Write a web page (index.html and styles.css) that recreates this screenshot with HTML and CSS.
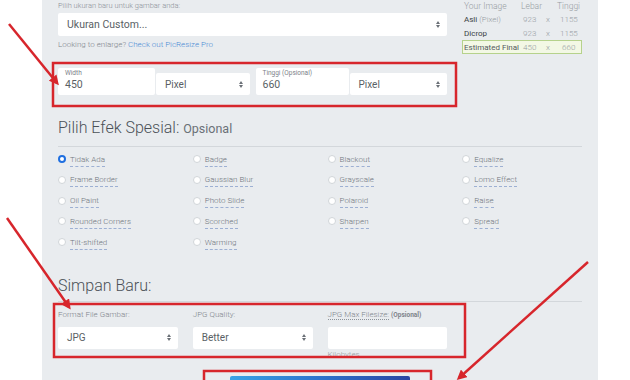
FILE: index.html
```html
<!DOCTYPE html>
<html>
<head>
<meta charset="utf-8">
<link rel="stylesheet" href="styles.css">
</head>
<body>
<div class="page">
  <div class="panel">
    <div class="top grid4">
      <div class="left">
        <div class="lbl first">Pilih ukuran baru untuk gambar anda:</div>
        <div class="select big"><span>Ukuran Custom...</span><svg class="caret" width="4" height="7" viewBox="0 0 4 7"><path d="M0 3 L2 0 L4 3 Z M0 4 L2 7 L4 4 Z" fill="#6b7077"/></svg></div>
        <div class="lbl hint">Looking to enlarge? <span class="link">Check out PicResize Pro</span></div>
        <div class="dims">
          <div class="dimgroup">
            <div class="finput w1"><span class="flbl">Width</span><span class="fval">450</span></div>
            <div class="select small s1"><span>Pixel</span><svg class="caret" width="4" height="7" viewBox="0 0 4 7"><path d="M0 3 L2 0 L4 3 Z M0 4 L2 7 L4 4 Z" fill="#6b7077"/></svg></div>
          </div>
          <div class="dimgroup">
            <div class="finput w2"><span class="flbl">Tinggi (Opsional)</span><span class="fval">660</span></div>
            <div class="select small s2"><span>Pixel</span><svg class="caret" width="4" height="7" viewBox="0 0 4 7"><path d="M0 3 L2 0 L4 3 Z M0 4 L2 7 L4 4 Z" fill="#6b7077"/></svg></div>
          </div>
        </div>
      </div>
      <div class="info">
        <div class="trow head"><span class="c1">Your Image</span><span class="c2">Lebar</span><span class="c3"></span><span class="c4">Tinggi</span></div>
        <div class="trow"><span class="c1"><b>Asli</b> <i>(Pixel)</i></span><span class="c2 num">923</span><span class="c3">x</span><span class="c4 num">1155</span></div>
        <div class="trow"><span class="c1"><b>Dicrop</b></span><span class="c2 num">923</span><span class="c3">x</span><span class="c4 num">1155</span></div>
        <div class="trow final"><span class="c1"><b>Estimated Final</b></span><span class="c2 num">450</span><span class="c3">x</span><span class="c4 num f4">660</span></div>
      </div>
    </div>

    <h2 class="heading">Pilih Efek Spesial: <small>Opsional</small></h2>
    <div class="effects">
      <div class="eff"><span class="radio on"></span><span class="etext">Tidak Ada</span></div>
      <div class="eff"><span class="radio"></span><span class="etext">Badge</span></div>
      <div class="eff"><span class="radio"></span><span class="etext">Blackout</span></div>
      <div class="eff"><span class="radio"></span><span class="etext">Equalize</span></div>
      <div class="eff"><span class="radio"></span><span class="etext">Frame Border</span></div>
      <div class="eff"><span class="radio"></span><span class="etext">Gaussian Blur</span></div>
      <div class="eff"><span class="radio"></span><span class="etext">Grayscale</span></div>
      <div class="eff"><span class="radio"></span><span class="etext">Lomo Effect</span></div>
      <div class="eff"><span class="radio"></span><span class="etext">Oil Paint</span></div>
      <div class="eff"><span class="radio"></span><span class="etext">Photo Slide</span></div>
      <div class="eff"><span class="radio"></span><span class="etext">Polaroid</span></div>
      <div class="eff"><span class="radio"></span><span class="etext">Raise</span></div>
      <div class="eff"><span class="radio"></span><span class="etext">Rounded Corners</span></div>
      <div class="eff"><span class="radio"></span><span class="etext">Scorched</span></div>
      <div class="eff"><span class="radio"></span><span class="etext">Sharpen</span></div>
      <div class="eff"><span class="radio"></span><span class="etext">Spread</span></div>
      <div class="eff"><span class="radio"></span><span class="etext">Tilt-shifted</span></div>
      <div class="eff"><span class="radio"></span><span class="etext">Warming</span></div>
    </div>

    <h2 class="heading h2b">Simpan Baru:</h2>
    <div class="save grid4">
      <div class="field">
        <div class="lbl">Format File Gambar:</div>
        <div class="select small"><span>JPG</span><svg class="caret" width="4" height="7" viewBox="0 0 4 7"><path d="M0 3 L2 0 L4 3 Z M0 4 L2 7 L4 4 Z" fill="#6b7077"/></svg></div>
      </div>
      <div class="field">
        <div class="lbl">JPG Quality:</div>
        <div class="select small"><span>Better</span><svg class="caret" width="4" height="7" viewBox="0 0 4 7"><path d="M0 3 L2 0 L4 3 Z M0 4 L2 7 L4 4 Z" fill="#6b7077"/></svg></div>
      </div>
      <div class="field">
        <div class="lbl"><span class="dotted">JPG Max Filesize:</span> <span class="opt">(Opsional)</span></div>
        <div class="textbox"></div>
        <div class="lbl kb">Kilobytes</div>
      </div>
    </div>
    <div class="btnwrap"><div class="btn"></div></div>
  </div>

  <svg class="overlay" width="630" height="380" viewBox="0 0 630 380">
    <defs>
      <marker id="ah" viewBox="0 0 10 10" refX="7" refY="5" markerWidth="4" markerHeight="4" orient="auto">
        <path d="M0 0 L10 5 L0 10 Z" fill="#d7262c"/>
      </marker>
    </defs>
    <g fill="none" stroke="#d7262c" stroke-width="2.5">
      <rect x="53" y="63" width="403" height="43"/>
      <rect x="54" y="304" width="411" height="53"/>
      <rect x="204" y="371" width="227" height="30"/>
      <line x1="9" y1="24" x2="57" y2="83" marker-end="url(#ah)"/>
      <line x1="7" y1="218" x2="69" y2="307" marker-end="url(#ah)"/>
      <line x1="588" y1="262" x2="459" y2="378" marker-end="url(#ah)"/>
    </g>
  </svg>
</div>
</body>
</html>
```

FILE: styles.css
```css
* { box-sizing: border-box; }
html, body { margin: 0; padding: 0; background: #ffffff; }
body { font-family: Roboto, "Liberation Sans", Arial, sans-serif; color: #6c737a; }
.page { position: relative; width: 630px; height: 380px; overflow: hidden; background: #fff; }
.panel { margin-left: 42px; width: 556px; height: 380px; background: #e9ecef; padding: 0 16px 0 16px; }
.grid4 { display: grid; grid-template-columns: repeat(4, 1fr); column-gap: 15px; width: 524px; }
.top .left { grid-column: span 3; }
.lbl { font-size: 8px; font-weight: 300; line-height: 11px; height: 11px; color: #7f858c; white-space: nowrap; }
.lbl.first { font-size: 7.5px; color: #8a9097; }
.hint { margin-top: 3px; }
.link { color: #4b8bd4; }
.select { position: relative; background: #fff; border-radius: 2px; display: flex; align-items: center; color: #5a5f65; }
.select .caret { position: absolute; right: 7px; top: 50%; margin-top: -3.5px; }
.select.big { margin-top: 2px; height: 23px; font-size: 10.5px; padding-left: 9px; }
.select.small { height: 22px; font-size: 10px; padding-left: 9px; }
.dims { display: flex; gap: 6px; margin-top: 18px; height: 27px; }
.dimgroup { display: flex; gap: 1px; flex: 1; align-items: flex-end; }
.finput { background: #fff; height: 27px; border-radius: 2px; padding: 0 7px; display: flex; flex-direction: column; }
.finput.w1 { width: 97px; }
.finput.w2 { width: 93px; }
.flbl { font-size: 6.5px; line-height: 7px; margin-top: 2px; color: #7b8188; }
.fval { font-size: 10.5px; line-height: 14px; margin-top: 1px; color: #5a5f65; }
.select.s1 { flex: 1; }
.select.s2 { flex: 1; }
.info { font-size: 8px; font-weight: 300; color: #979da3; }
.trow { display: flex; height: 14px; align-items: center; padding-left: 2px; white-space: nowrap; }
.trow.head { height: 12px; font-size: 8.5px; }
.trow b { font-weight: 400; color: #3a3f44; }
.trow i { font-style: normal; color: #979da3; }
.c1 { width: 57px; }
.c2 { width: 25px; }
.c2.num { padding-left: 2px; }
.c3 { width: 11px; }
.c4 { width: 24px; }
.c4.num { padding-left: 3px; }
.f4 { padding-left: 5px !important; }
.trow.final { border: 1px solid #b6d28c; background: #f3f8e5; padding-left: 1px; }
.trow.final b { color: #555b60; }
.heading { margin: 22px 0 0 0; font-size: 16px; line-height: 22px; font-weight: 300; color: #4b5157; padding-bottom: 6px; border-bottom: 1px solid #d3d7db; width: 524px; }
.heading small { font-size: 12.5px; font-weight: 400; color: #6b7177; }
.effects { display: grid; grid-template-columns: repeat(4, 1fr); column-gap: 15px; grid-auto-rows: 20.75px; width: 524px; margin-top: 3px; }
.eff { display: flex; align-items: flex-start; gap: 4px; }
.radio { width: 8px; height: 8px; border-radius: 50%; background: #fff; border: 1px solid #d1d5d9; margin-top: 5px; flex: none; }
.radio.on { background: #fff; border: 2.5px solid #1f6fe0; }
.etext { font-size: 8px; font-weight: 300; line-height: 11px; margin-top: 3.5px; color: #6f757c; border-bottom: 1px dashed #9db0d3; padding-bottom: 1px; white-space: nowrap; }
.h2b { margin-top: 21px; padding-bottom: 4px; }
.save { margin-top: 7.5px; }
.field .select, .field .textbox { margin-top: 6.5px; }
.textbox { height: 22px; background: #fff; border-radius: 2px; }
.dotted { border-bottom: 1px dotted #8d939a; }
.opt { font-size: 6.5px; font-weight: 700; color: #7d838a; }
.kb { margin-top: 0; color: #979da3; }
.btnwrap { display: flex; justify-content: center; margin-top: 16.5px; width: 524px; }
.btn { width: 180px; height: 40px; background: linear-gradient(90deg, #3aa3e6 0%, #2e73cc 50%, #2a45a3 100%); border-radius: 2px; }
.overlay { position: absolute; left: 0; top: 0; pointer-events: none; }
```
